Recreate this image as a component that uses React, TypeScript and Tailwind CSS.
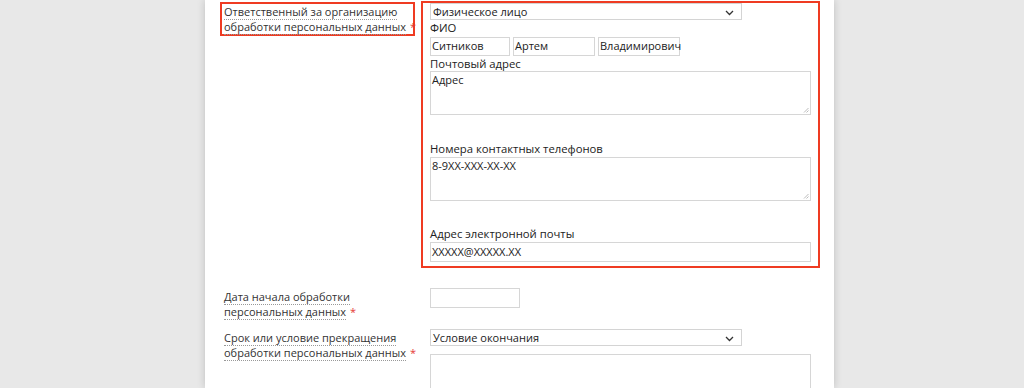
import React from "react";

const Chevron = () => (
  <svg width="9" height="6" viewBox="0 0 9 6" className="absolute right-[7px] top-[6px]">
    <path d="M1 1 L4.5 4.5 L8 1" fill="none" stroke="#333" strokeWidth="1.3" />
  </svg>
);

const Grip = () => (
  <svg width="6" height="6" viewBox="0 0 6 6" className="absolute right-[1px] bottom-[1px]">
    <path d="M5.5 1 L1 5.5 M5.5 3.5 L3.5 5.5" stroke="#aaa" strokeWidth="0.8" />
  </svg>
);

const Select = ({ value }: { value: string }) => (
  <div className="relative w-[312px] h-[17px] border border-[#d4d4d4] bg-white text-[11px] leading-[15px] pl-[2px] text-[#222]">
    {value}
    <Chevron />
  </div>
);

const Label = ({ lines }: { lines: string[] }) => (
  <div className="text-[11px] leading-[15px] text-[#333]">
    {lines.map((l, i) => (
      <div key={i} className="whitespace-nowrap">
        <span className="border-b border-dotted border-[#999]">{l}</span>
        {i === lines.length - 1 && <span className="text-[#e53935] ml-[4px] text-[11px]">*</span>}
      </div>
    ))}
  </div>
);

const FieldLabel = ({ children }: { children: React.ReactNode }) => (
  <div className="text-[11.3px] leading-[14px] text-[#222] whitespace-nowrap">{children}</div>
);

const Box = ({
  w,
  h,
  grip,
  children,
}: {
  w: string;
  h: string;
  grip?: boolean;
  children?: React.ReactNode;
}) => (
  <div className={`${w} ${h} border border-[#d6d6d6] bg-white text-[11px] leading-[16px] pl-[1px] text-[#222] relative whitespace-nowrap`}>
    {children}
    {grip && <Grip />}
  </div>
);

export default function App() {
  return (
    <div
      className="w-[1024px] h-[388px] bg-[#e8e8e8] overflow-hidden flex justify-start"
      style={{ fontFamily: '"Open Sans", "Noto Sans", sans-serif' }}
    >
      <div className="ml-[205px] w-[629px] h-[388px] bg-white shadow-[0_0_8px_rgba(0,0,0,0.18)] pl-[15px]">
        <div className="flex mt-[1px]">
          <div className="w-[195px] h-[34px] border-2 border-[#ef3b22] pl-[2px] mt-[1px]">
            <Label lines={["Ответственный за организацию", "обработки персональных данных"]} />
          </div>
          <div className="ml-[6px] w-[399px] border-2 border-[#ef3b22] pl-[7px] pb-[4px]">
            <Select value="Физическое лицо" />
            <div className="mt-[1px]">
              <FieldLabel>ФИО</FieldLabel>
            </div>
            <div className="flex gap-[3px] mt-[2px]">
              <Box w="w-[80px]" h="h-[19px]">Ситников</Box>
              <Box w="w-[82px]" h="h-[19px]">Артем</Box>
              <Box w="w-[82px]" h="h-[19px]">Владимирович</Box>
            </div>
            <div className="mt-[1px]">
              <FieldLabel>Почтовый адрес</FieldLabel>
            </div>
            <Box w="w-[381px]" h="h-[44px]" grip>
              Адрес
            </Box>
            <div className="mt-[27px]">
              <FieldLabel>Номера контактных телефонов</FieldLabel>
            </div>
            <div className="mt-[1px]">
              <Box w="w-[381px]" h="h-[44px]" grip>
                8-9XX-XXX-XX-XX
              </Box>
            </div>
            <div className="mt-[26px]">
              <FieldLabel>Адрес электронной почты</FieldLabel>
            </div>
            <div className="mt-[1px]">
              <Box w="w-[381px]" h="h-[20px]">
                <div className="pt-[1px]">XXXXX@XXXXX.XX</div>
              </Box>
            </div>
          </div>
        </div>
        <div className="flex mt-[20px] h-[41px]">
          <div className="w-[201px] pl-[4px] pt-[1px]">
            <Label lines={["Дата начала обработки", "персональных данных"]} />
          </div>
          <div className="ml-[9px]">
            <Box w="w-[90px]" h="h-[20px]" />
          </div>
        </div>
        <div className="flex">
          <div className="w-[201px] pl-[4px] pt-[1px]">
            <Label lines={["Срок или условие прекращения", "обработки персональных данных"]} />
          </div>
          <div className="ml-[9px]">
            <Select value="Условие окончания" />
            <div className="mt-[8px]">
              <Box w="w-[381px]" h="h-[60px]" />
            </div>
          </div>
        </div>
      </div>
    </div>
  );
}
